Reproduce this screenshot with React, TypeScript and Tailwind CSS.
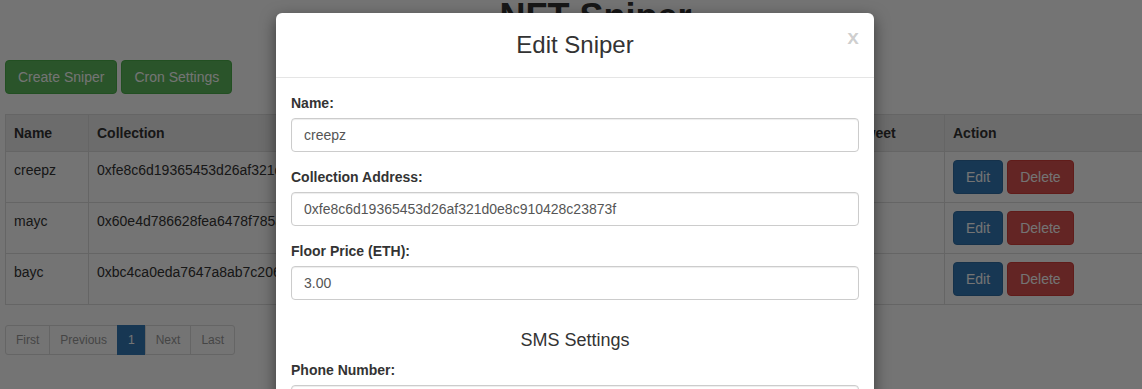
import React from 'react';

const rows = [
  { name: 'creepz', address: '0xfe8c6d19365453d26af321d0e8c910428c23873f', price: '3.00' },
  { name: 'mayc', address: '0x60e4d786628fea6478f785a6d7e704777c86a7c6', price: '12.00' },
  { name: 'bayc', address: '0xbc4ca0eda7647a8ab7c2061c2e118a18a936f13d', price: '80.00' },
];

function Field({ label, value }: { label: string; value?: string }) {
  return (
    <div className="mb-[15px]">
      <label className="block font-bold mb-[5px] leading-5">{label}</label>
      <input
        readOnly
        value={value ?? ''}
        className="block w-full h-[34px] px-3 text-[14px] text-[#555] border border-[#ccc] rounded shadow-[inset_0_1px_1px_rgba(0,0,0,0.075)] outline-none bg-white"
      />
    </div>
  );
}

export default function App() {
  return (
    <div
      className="relative w-[1142px] h-[389px] overflow-hidden bg-white text-[#333] text-[14px] leading-5"
      style={{ fontFamily: '"Liberation Sans", Arial, sans-serif' }}
    >
      {/* page */}
      <div className="w-[1186px] pl-[5px]">
        <h1 className="text-center text-[36px] font-bold leading-[40px] mt-[-3px] mb-[23px]">NFT Sniper</h1>

        <div className="flex gap-1">
          <button className="h-[34px] px-3 rounded bg-[#5cb85c] border border-[#4cae4c] text-white">Create Sniper</button>
          <button className="h-[34px] px-3 rounded bg-[#5cb85c] border border-[#4cae4c] text-white">Cron Settings</button>
        </div>

        <table className="mt-5 w-[1176px] border-collapse border border-[#ddd]">
          <thead>
            <tr className="bg-[#eee]">
              <th className="w-[83px] border border-[#ddd] p-2 text-left">Name</th>
              <th className="w-[380px] border border-[#ddd] p-2 text-left">Collection</th>
              <th className="w-[380px] border border-[#ddd] p-2 text-left">Floor Price</th>
              <th className="w-[96px] border border-[#ddd] p-2 text-left">Tweet</th>
              <th className="border border-[#ddd] p-2 text-left">Action</th>
            </tr>
          </thead>
          <tbody>
            {rows.map((r) => (
              <tr key={r.name}>
                <td className="border border-[#ddd] p-2 align-top">{r.name}</td>
                <td className="border border-[#ddd] p-2 align-top">{r.address}</td>
                <td className="border border-[#ddd] p-2 align-top">{r.price}</td>
                <td className="border border-[#ddd] p-2 align-top"></td>
                <td className="border border-[#ddd] p-2 align-top">
                  <div className="flex gap-1">
                    <button className="h-[34px] px-3 rounded bg-[#337ab7] border border-[#2e6da4] text-white">Edit</button>
                    <button className="h-[34px] px-3 rounded bg-[#d9534f] border border-[#d43f3a] text-white">Delete</button>
                  </div>
                </td>
              </tr>
            ))}
          </tbody>
        </table>

        <ul className="mt-5 inline-flex text-[12px] leading-[18px] text-[#999]">
          <li className="px-[10px] py-[5px] border border-[#ddd] rounded-l-[3px]">First</li>
          <li className="px-[10px] py-[5px] border border-[#ddd] -ml-px">Previous</li>
          <li className="px-[10px] py-[5px] border border-[#337ab7] -ml-px bg-[#337ab7] text-white">1</li>
          <li className="px-[10px] py-[5px] border border-[#ddd] -ml-px">Next</li>
          <li className="px-[10px] py-[5px] border border-[#ddd] -ml-px rounded-r-[3px]">Last</li>
        </ul>
      </div>

      {/* backdrop */}
      <div className="absolute inset-0 bg-black/[0.545]" />

      {/* modal */}
      <div className="absolute left-[276px] top-[13px] w-[598px] bg-white rounded-md shadow-[0_5px_15px_rgba(0,0,0,0.5)]">
        <div className="relative p-[15px] border-b border-[#e5e5e5]">
          <h4 className="text-center text-[24px] leading-[34px]">Edit Sniper</h4>
          <span className="absolute right-[15px] top-[13px] text-[21px] font-bold leading-[21px] text-black/20">x</span>
        </div>
        <div className="p-[15px]">
          <Field label="Name:" value="creepz" />
          <Field label="Collection Address:" value="0xfe8c6d19365453d26af321d0e8c910428c23873f" />
          <Field label="Floor Price (ETH):" value="3.00" />
          <h4 className="text-center text-[18px] leading-5 mt-[30px] mb-[10px]">SMS Settings</h4>
          <Field label="Phone Number:" value="" />
        </div>
      </div>
    </div>
  );
}
